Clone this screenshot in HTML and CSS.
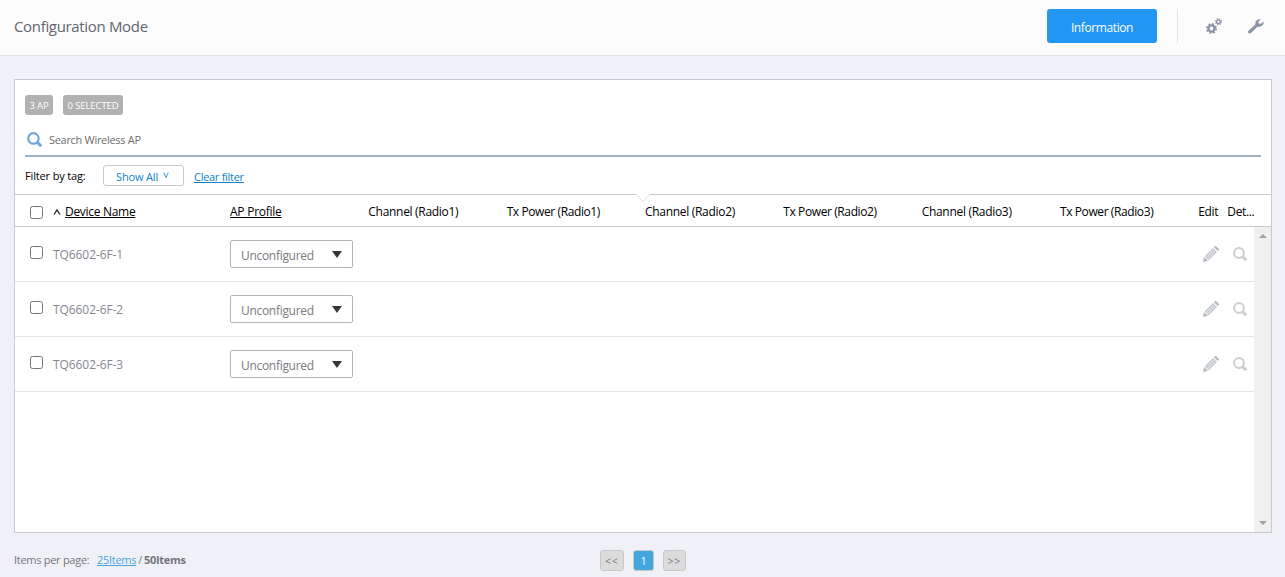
FILE: index.html
```
<!DOCTYPE html>
<html lang="en">
<head>
    <meta charset="UTF-8">
    <meta name="viewport" content="width=device-width, initial-scale=1.0">
    <title>Configuration Mode</title>
    <link rel="stylesheet" href="styles.css">
</head>
<body>
    <!-- shared icons -->
    <svg width="0" height="0" class="icon-defs">
        <symbol id="icon-search" viewBox="0 0 14 14">
            <circle cx="6" cy="6" r="4.900" fill="none" stroke="currentColor" stroke-width="2"/>
            <path d="M9.400 9.400L13.200 13.200" stroke="currentColor" stroke-width="2.800"/>
        </symbol>
        <symbol id="icon-pencil" viewBox="0 0 16 16">
            <path d="M0 16l1.200-5 3.800 3.800z" fill="#b4b9bf"/>
            <path d="M1.800 10.200L10 2l4 4-8.200 8.200z" fill="#c3c8ce"/>
            <path d="M3.400 11.300L10.700 4M4.900 12.700L12.200 5.400" stroke="#fff" stroke-width="0.700"/>
            <path d="M10.900 1.200L12.100 0h.8L16 3.100v.8l-1.200 1.200z" fill="#b4b9bf"/>
        </symbol>
    </svg>

    <div class="header">
        <h1>Configuration Mode</h1>
        <button class="info-btn">Information</button>
        <div class="header-icons">
            <svg class="gears" width="17" height="17" viewBox="0 0 17 17">
                <circle cx="5.500" cy="10.500" r="3.100" fill="none" stroke="#8d93a8" stroke-width="2.400"/>
                <circle cx="5.500" cy="10.500" r="4.700" fill="none" stroke="#8d93a8" stroke-width="1.700" stroke-dasharray="1.846 1.846"/>
                <circle cx="12.500" cy="3.700" r="1.900" fill="none" stroke="#8d93a8" stroke-width="1.300"/>
                <circle cx="12.500" cy="3.700" r="2.900" fill="none" stroke="#8d93a8" stroke-width="1.200" stroke-dasharray="1.139 1.139"/>
            </svg>
            <svg class="wrench" width="16" height="15" viewBox="0 0 16 15">
                <path d="M12.800 .4C11 -.3 8.300 .6 7.600 2.800c-.3 1-.2 1.700 0 2.500L.8 11.500c-1 .9-1 1.900-.4 2.600.7.7 1.800.6 2.600-.2l6.400-6.200c2.600.7 5.600-.7 6.300-3.700V2.600l-2.900 2.200-2.100-.3-.5-1.700z" fill="#8d93a8"/>
            </svg>
        </div>
    </div>

    <div class="panel">
        <div class="badges">
            <span class="badge badge-ap">3 AP</span>
            <span class="badge badge-selected">0 SELECTED</span>
        </div>
        <div class="search-box">
            <svg width="15" height="15"><use href="#icon-search"/></svg>
            <span>Search Wireless AP</span>
        </div>
        <div class="filter">
            <span class="filter-label">Filter by tag:</span>
            <button class="tag-btn"><span>Show All</span><svg width="6" height="7" viewBox="0 0 6 7"><path d="M.8 .5L3 5.500L5.200 .5" fill="none" stroke="#0d82c8" stroke-width=".8"/></svg></button>
            <a class="clear">Clear filter</a>
        </div>

        <div class="table-head">
            <svg class="notch" width="16" height="9" viewBox="0 0 16 9"><path d="M1 0h14L8 7.500z" fill="#fff"/><path d="M1 .5L8 7.500L15 .5" fill="none" stroke="#dcdcdc"/></svg>
            <div class="cells">
                <div><input type="checkbox"></div>
                <div class="sorted"><svg width="8" height="6" viewBox="0 0 8 6"><path d="M1 5.500L4 1l3 4.500" fill="none" stroke="#111" stroke-width="1.200"/></svg><u>Device Name</u></div>
                <div><u class="profile">AP Profile</u></div>
                <div class="channel">Channel (Radio1)</div>
                <div class="power">Tx Power (Radio1)</div>
                <div class="channel">Channel (Radio2)</div>
                <div class="power">Tx Power (Radio2)</div>
                <div class="channel">Channel (Radio3)</div>
                <div class="power">Tx Power (Radio3)</div>
                <div>Edit</div>
                <div>Det...</div>
            </div>
        </div>

        <div class="table-body">
            <div class="rows">
                <div class="row cells">
                    <div><input type="checkbox"></div>
                    <div class="name">TQ6602-6F-1</div>
                    <div class="select"><span>Unconfigured</span><i></i></div>
                    <svg class="edit" width="16" height="16"><use href="#icon-pencil"/></svg>
                    <svg class="detail" width="14" height="14"><use href="#icon-search"/></svg>
                </div>
                <div class="row cells">
                    <div><input type="checkbox"></div>
                    <div class="name">TQ6602-6F-2</div>
                    <div class="select"><span>Unconfigured</span><i></i></div>
                    <svg class="edit" width="16" height="16"><use href="#icon-pencil"/></svg>
                    <svg class="detail" width="14" height="14"><use href="#icon-search"/></svg>
                </div>
                <div class="row cells">
                    <div><input type="checkbox"></div>
                    <div class="name">TQ6602-6F-3</div>
                    <div class="select"><span>Unconfigured</span><i></i></div>
                    <svg class="edit" width="16" height="16"><use href="#icon-pencil"/></svg>
                    <svg class="detail" width="14" height="14"><use href="#icon-search"/></svg>
                </div>
            </div>
            <div class="scrollbar"><i class="up"></i><i class="down"></i></div>
        </div>
    </div>

    <div class="footer">
        <div class="per-page"><span class="label">Items per page:</span><a>25Items</a><span class="slash">/</span><b>50Items</b></div>
        <div class="pager">
            <span class="page-btn prev">&lt;&lt;</span>
            <span class="page-btn current">1</span>
            <span class="page-btn next">&gt;&gt;</span>
        </div>
    </div>
</body>
</html>
```
FILE: styles.css
```
* {
    box-sizing: border-box;
}
body {
    margin: 0;
    height: 577px;
    overflow: hidden;
    background-color: #f0f1f6;
    font-family: "Open Sans", "Noto Sans", sans-serif;
    font-size: 12px;
    letter-spacing: -0.35px;
    color: #000;
    white-space: nowrap;
}
svg {
    display: block;
    flex: none;
}
.icon-defs {
    position: absolute;
}
.header {
    display: flex;
    align-items: center;
    height: 56px;
    padding: 0 21px 3px 14px;
    background-color: #fcfcfc;
    border-bottom: 1px solid #e2e4e7;
}
.header h1 {
    flex: 1;
    margin: 0;
    font-size: 15px;
    font-weight: 400;
    letter-spacing: -0.33px;
    color: #62656f;
}
.info-btn {
    width: 110px;
    height: 34px;
    padding: 2px 0 0;
    border: none;
    border-radius: 3px;
    background-color: #2196f3;
    color: #fff;
    font-family: inherit;
    font-size: 12px;
    letter-spacing: -0.4px;
}
.header-icons {
    display: flex;
    align-items: center;
    height: 34px;
    margin-left: 20px;
    padding-left: 28px;
    border-left: 1px solid #e1e2e5;
}
.wrench {
    margin-left: 25px;
}
.panel {
    display: flex;
    flex-direction: column;
    width: 1258px;
    height: 454px;
    margin: 23px 0 0 14px;
    border: 1px solid #c9cccf;
    background-color: #fff;
}
.badges {
    display: flex;
    gap: 10px;
    height: 35px;
    padding: 15px 10px 0;
}
.badge {
    height: 20px;
    border-radius: 3px;
    background-color: #b1b1b1;
    color: #fff;
    font-size: 9.5px;
    letter-spacing: -0.1px;
    line-height: 21px;
    text-align: center;
}
.badge-ap {
    width: 28px;
}
.badge-selected {
    width: 60px;
}
.search-box {
    display: flex;
    align-items: center;
    height: 42px;
    margin: 0 10px;
    padding: 8px 0 0 2px;
    border-bottom: 2px solid #9fb3c2;
    color: #6c6c6c;
    font-size: 11px;
    letter-spacing: -0.3px;
}
.search-box svg {
    margin: 1px 7px 0 0;
    color: #6fa5dc;
}
.filter {
    display: flex;
    align-items: center;
    height: 37px;
    padding: 0 10px;
    font-size: 11px;
}
.filter-label {
    width: 78px;
    letter-spacing: -0.15px;
}
.tag-btn {
    display: flex;
    align-items: center;
    width: 81px;
    height: 21px;
    margin-right: 10px;
    padding: 2px 0 0 12px;
    border: 1px solid #c5c8cc;
    border-radius: 3px;
    background-color: #fff;
    color: #0d82c8;
    font-family: inherit;
    font-size: 11px;
    letter-spacing: -0.15px;
}
.tag-btn svg {
    margin: -2px 0 0 5px;
}
.clear {
    padding-top: 2px;
    color: #0d82c8;
    letter-spacing: -0.28px;
    text-decoration: underline;
}
.table-head {
    position: relative;
    height: 33px;
    border-top: 1px solid #c5cbcd;
    border-bottom: 1px solid #c5cbcd;
}
.notch {
    position: absolute;
    left: 620px;
    top: -1px;
}
.cells {
    display: grid;
    grid-template-columns: 38px 177px repeat(7, 138.33px) 29px 27px;
    align-items: center;
}
.table-head .cells {
    height: 33px;
}
.cells input {
    display: block;
    width: 13px;
    height: 13px;
    margin: 2px 0 0 15px;
}
.sorted {
    display: flex;
    align-items: center;
    gap: 4px;
}
.sorted u {
    letter-spacing: -0.3px;
}
.profile {
    letter-spacing: -0.25px;
}
.channel {
    letter-spacing: -0.3px;
}
.power {
    letter-spacing: -0.4px;
}
.table-body {
    display: flex;
    flex: 1;
}
.rows {
    flex: 1;
}
.row {
    height: 55px;
    border-bottom: 1px solid #e1e2e4;
    color: #85888f;
}
.row input {
    margin-top: -3px;
}
.name {
    padding-top: 1px;
    letter-spacing: -0.08px;
}
.select {
    display: flex;
    align-items: center;
    justify-content: space-between;
    width: 123px;
    height: 28px;
    padding: 3px 10px 0;
    border: 1px solid #b3b5ba;
    border-radius: 2px;
    letter-spacing: -0.3px;
    color: #777a80;
}
.select i {
    margin-top: -3px;
    border: 5.5px solid transparent;
    border-top: 7px solid #35373f;
    border-bottom: none;
}
.edit {
    grid-column: 10;
    margin-left: 5px;
}
.detail {
    grid-column: 11;
    margin-left: 6px;
    color: #cbcdd0;
}
.scrollbar {
    display: flex;
    flex-direction: column;
    justify-content: space-between;
    align-items: center;
    width: 17px;
    flex: none;
    padding: 7px 0 7px;
    background-color: #f0f0f0;
}
.scrollbar i {
    border: 4px solid transparent;
}
.scrollbar .up {
    border-top: none;
    border-bottom-color: #a3a3a3;
}
.scrollbar .down {
    border-bottom: none;
    border-top-color: #a3a3a3;
}
.footer {
    display: grid;
    grid-template-columns: 586px auto;
    align-items: center;
    height: 44px;
    padding: 11px 14px 0;
    font-size: 11px;
    color: #73767f;
}
.per-page {
    display: flex;
    margin-top: -2px;
    letter-spacing: -0.28px;
}
.label {
    width: 83px;
}
.per-page a {
    color: #45a4dc;
    text-decoration: underline;
}
.slash {
    margin: 0 2px;
}
.pager {
    display: flex;
}
.page-btn {
    height: 21px;
    border: 1px solid #c8c9cb;
    border-radius: 3px;
    background-color: #dcdcdc;
    line-height: 20px;
    text-align: center;
}
.prev {
    width: 24px;
    font-size: 10px;
    letter-spacing: 1px;
}
.current {
    width: 21px;
    margin: 0 9px;
    background-color: #43a6dd;
    color: #fff;
}
.next {
    width: 23px;
    font-size: 10px;
    letter-spacing: 1px;
}
```
